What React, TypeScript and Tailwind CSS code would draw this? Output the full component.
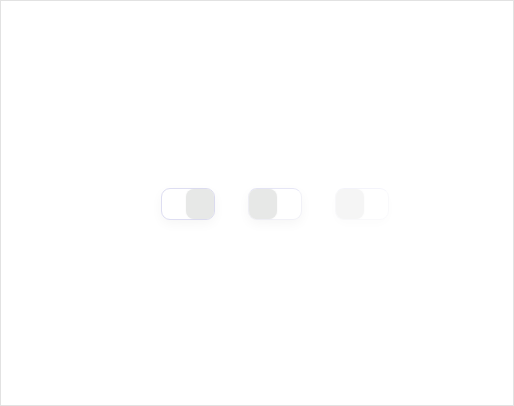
import React from 'react';

function Toggle({ on, disabled, focused }: { on: boolean; disabled?: boolean; focused?: boolean }) {
  return (
    <div
      className={
        'flex h-[32px] w-[54px] rounded-[9px] border bg-white shadow-[0_4px_12px_rgba(0,0,0,0.04)] ' +
        (on ? 'justify-end ' : 'justify-start ') +
        (focused ? 'border-[#dedef2] ' : 'border-[#f1f1f7] border-t-[#e6e6f6] ') +
        (disabled ? 'opacity-40' : '')
      }
    >
      <div className="h-full w-[28px] rounded-[8px] bg-[#e7e8e7] shadow-[0_0_2px_rgba(0,0,0,0.05)]" />
    </div>
  );
}

export default function App() {
  return (
    <div
      className="flex h-screen w-screen items-center justify-center gap-[33px] border border-[#e2e2e2] bg-white pl-[36px] pt-[2px]"
      style={{ fontFamily: '"Liberation Sans", sans-serif' }}
    >
      <Toggle on focused />
      <Toggle on={false} />
      <Toggle on={false} disabled />
    </div>
  );
}
